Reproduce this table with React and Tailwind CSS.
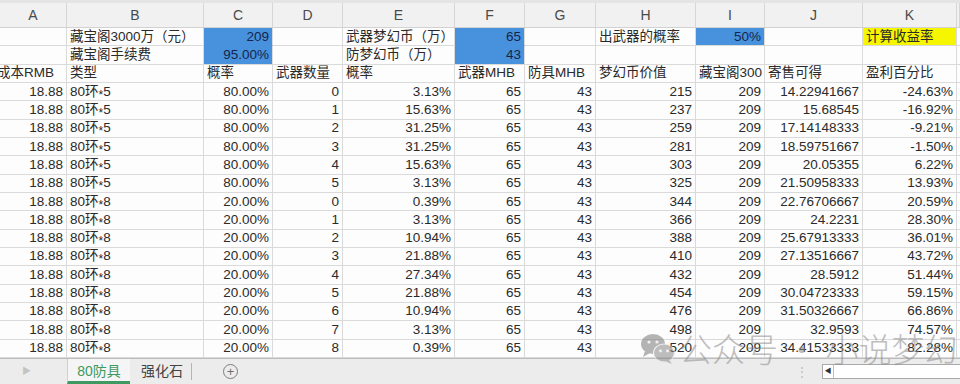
import React from 'react';

const W = [
  'w-[67px]',
  'w-[137px]',
  'w-[69px]',
  'w-[70px]',
  'w-[112px]',
  'w-[70px]',
  'w-[71px]',
  'w-[100px]',
  'w-[69px]',
  'w-[98px]',
  'w-[94px]',
  'flex-1',
];

const LETTERS = ['A', 'B', 'C', 'D', 'E', 'F', 'G', 'H', 'I', 'J', 'K', ''];

const rows5 = [
  [0, '3.13%', 215, '14.22941667', '-24.63%'],
  [1, '15.63%', 237, '15.68545', '-16.92%'],
  [2, '31.25%', 259, '17.14148333', '-9.21%'],
  [3, '31.25%', 281, '18.59751667', '-1.50%'],
  [4, '15.63%', 303, '20.05355', '6.22%'],
  [5, '3.13%', 325, '21.50958333', '13.93%'],
];

const rows8 = [
  [0, '0.39%', 344, '22.76706667', '20.59%'],
  [1, '3.13%', 366, '24.2231', '28.30%'],
  [2, '10.94%', 388, '25.67913333', '36.01%'],
  [3, '21.88%', 410, '27.13516667', '43.72%'],
  [4, '27.34%', 432, '28.5912', '51.44%'],
  [5, '21.88%', 454, '30.04723333', '59.15%'],
  [6, '10.94%', 476, '31.50326667', '66.86%'],
  [7, '3.13%', 498, '32.9593', '74.57%'],
  [8, '0.39%', 520, '34.41533333', '82.28%'],
];

// each cell: [text, align, extra]
const L = (t, extra = '') => ({ t, a: 'l', extra });
const R = (t, extra = '') => ({ t, a: 'r', extra });
const E = (extra = '') => ({ t: '', a: 'l', extra });

const BLUE = 'bg-[#4891dd] text-[#15264a] border-b-[#4891dd]';
const BLUE_LAST = 'bg-[#4891dd] text-[#15264a]';

const top = [
  [E(), L('藏宝阁3000万（元）'), R('209', BLUE), E(), L('武器梦幻币（万）'), R('65', BLUE), E(), L('出武器的概率'), R('50%', BLUE_LAST), E(), L('计算收益率', 'bg-[#f6f600]'), E()],
  [E(), L('藏宝阁手续费'), R('95.00%', BLUE_LAST), E(), L('防梦幻币（万）'), R('43', BLUE_LAST), E(), E(), E(), E(), E(), E()],
  [L(<span className="-ml-[3px]">成本RMB</span>, '!pl-0'), L('类型'), L('概率'), L('武器数量'), L('概率'), L('武器MHB'), L('防具MHB'), L('梦幻币价值'), L('藏宝阁300'), L('寄售可得'), L('盈利百分比'), E()],
];

const Type = ({ n }) => (
  <span>
    80环<span className="relative top-[3px] text-[12px]">*</span>{n}
  </span>
);

const dataRows = [
  ...rows5.map((r) => [5, '80.00%', ...r]),
  ...rows8.map((r) => [8, '20.00%', ...r]),
].map(([type, p, n, p2, mhb, val, pct]) => [
  R('18.88'),
  L(<Type n={type} />),
  R(p),
  R(n),
  R(p2),
  R('65'),
  R('43'),
  R(mhb),
  R('209'),
  R(val),
  R(pct),
  E(),
]);

function Cell({ cell, i }) {
  return (
    <div
      className={`${W[i]} shrink-0 h-full flex items-center overflow-hidden whitespace-nowrap border-r border-b border-[#dadada] ${
        cell.a === 'r' ? 'justify-end pr-[3px]' : 'justify-start pl-[3px]'
      } ${cell.extra}`}
    >
      {cell.t}
    </div>
  );
}

function Row({ cells }) {
  return (
    <div className="flex h-[18.33px]">
      {cells.map((c, i) => (
        <Cell key={i} cell={c} i={i} />
      ))}
    </div>
  );
}

function WeChat() {
  return (
    <svg width="36" height="32" viewBox="0 0 36 32">
      <ellipse cx="13" cy="11" rx="12" ry="10" fill="#7a7a7a" />
      <path d="M5 18 L3 24 L10 20 Z" fill="#7a7a7a" />
      <circle cx="9" cy="9" r="1.6" fill="#e8e8e8" />
      <circle cx="17" cy="9" r="1.6" fill="#e8e8e8" />
      <ellipse cx="24" cy="20" rx="10.5" ry="9" fill="#8a8a8a" stroke="#e6e6e6" strokeWidth="1.2" />
      <path d="M29 27 L32 31 L25 28 Z" fill="#8a8a8a" />
      <circle cx="20.5" cy="18" r="1.4" fill="#ececec" />
      <circle cx="27.5" cy="18" r="1.4" fill="#ececec" />
    </svg>
  );
}

export default function App() {
  return (
    <div className="relative w-[960px] h-[384px] overflow-hidden bg-[#fdfdfd] text-[13.5px] text-[#2a2a2a] font-['Liberation_Sans','Noto_Sans_CJK_SC',sans-serif]">
      <div className="h-[3px] bg-[#e4e4e4]" />
      <div className="flex h-[25px] bg-[#f1f1f1] border-b border-[#d2d2d2] text-[14px] text-[#4a4a4a]">
        {LETTERS.map((l, i) => (
          <div key={i} className={`${W[i]} shrink-0 flex items-center justify-center border-r border-[#d6d6d6]`}>
            {l}
          </div>
        ))}
      </div>

      {top.map((r, i) => (
        <Row key={'t' + i} cells={r} />
      ))}
      {dataRows.map((r, i) => (
        <Row key={'d' + i} cells={r} />
      ))}

      <div className="absolute left-0 right-0 bottom-0 h-[26px] flex items-center bg-[#ececec] border-t border-[#bcbcbc]">
        <div className="w-[67px] h-full flex items-center pl-[22px] text-[9px] text-[#c4c4c4]">▶</div>
        <div className="w-[63px] h-full flex items-center justify-center bg-[#f5f5f5] border-l border-[#d0d0d0] border-b-[3px] border-b-[#3e9a60] text-[14px] text-[#3e9a60] pt-[2px]">
          80防具
        </div>
        <div className="h-full flex items-center pl-[11px] pr-[8px] text-[14px] text-[#444]">强化石</div>
        <div className="w-px h-[17px] bg-[#b4b4b4]" />
        <div className="ml-[31px] w-[15px] h-[15px] rounded-full border border-[#7d7d7d] flex items-center justify-center text-[13px] leading-none text-[#6d6d6d]">
          +
        </div>
        <div className="flex-1" />
        <div className="mr-[14px] text-[12px] leading-none text-[#bdbdbd]">⋮</div>
        <div className="w-[138px] h-[15px] mb-[1px] flex bg-white border border-[#a9a9a9] border-r-0">
          <div className="w-[11px] h-full flex items-center justify-center border-r border-[#bdbdbd] text-[7px] text-[#333]">◀</div>
        </div>
      </div>

      <div className="absolute left-[640px] top-[332px] flex items-center opacity-55 pointer-events-none">
        <WeChat />
        <span className="ml-[3px] text-[33px] leading-none text-[#8c8c8c] font-['Noto_Sans_CJK_SC',sans-serif] font-light">
          公众号 · 小说梦幻
        </span>
      </div>
    </div>
  );
}
